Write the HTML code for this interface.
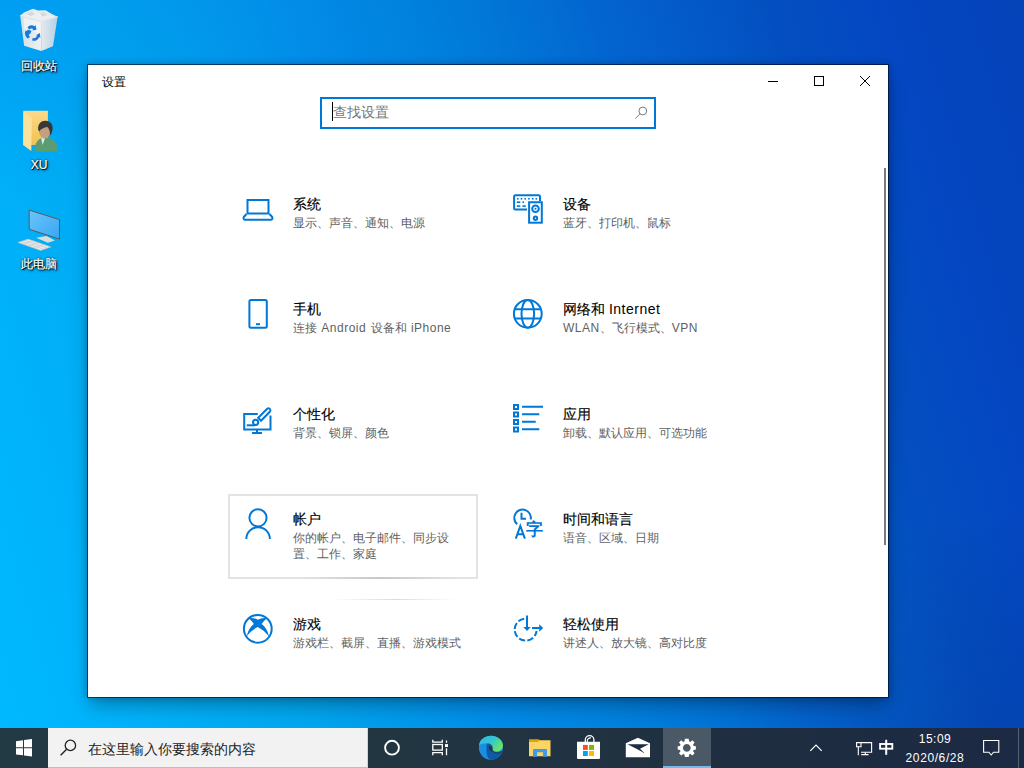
<!DOCTYPE html>
<html><head><meta charset="utf-8">
<style>
html,body{margin:0;padding:0;}
body{width:1024px;height:768px;overflow:hidden;position:relative;font-family:"Liberation Sans",sans-serif;
background:radial-gradient(ellipse 260px 200px at 0 0,rgba(0,60,230,.13),rgba(0,60,230,0)),radial-gradient(ellipse 300px 260px at 1024px 768px,rgba(10,0,60,.12),rgba(10,0,60,0)),linear-gradient(74deg,#00b9ff 0%,#00b3fb 10%,#00a6ee 26%,#028ce8 41%,#0082de 50%,#0178d8 56%,#0366d0 65%,#034ec0 80%,#0447c2 88%,#0442b8 100%);}
.abs{position:absolute;}
.dlabel{position:absolute;width:78px;text-align:center;color:#fff;font-size:12px;line-height:14px;
text-shadow:1px 1px 0 rgba(0,0,0,.85),0 0 2px #000,1px 1px 3px #000;-webkit-text-stroke:0.2px #fff;}
#win{position:absolute;left:87px;top:64px;width:800px;height:632px;background:#fff;border:1px solid rgba(0,10,30,.62);background-clip:padding-box;
box-shadow:0 0 7px rgba(0,0,0,.2),0 10px 18px -3px rgba(0,0,0,.3);}
.title{position:absolute;font-size:12px;line-height:16px;color:#000;}
.ctl{position:absolute;top:0;width:46px;height:32px;}
.item{position:absolute;width:250px;height:84px;}
.item .ic{position:absolute;left:12px;top:14px;width:36px;height:36px;}
.item .t{position:absolute;left:64px;top:10px;font-size:14px;line-height:20px;color:#000;white-space:nowrap;}
.item .s{position:absolute;left:64px;top:31px;font-size:12px;line-height:16px;color:#5f5f5f;width:175px;}
#taskbar{position:absolute;left:0;top:728px;width:1024px;height:40px;
background:linear-gradient(90deg,#223a44 0%,#223642 40%,#1f2e40 72%,#1c2944 100%);}
.tb{position:absolute;top:0;height:40px;}
.it{position:absolute;font-size:14px;line-height:20px;color:#000;white-space:nowrap;-webkit-text-stroke:0.15px #000;}
.is{position:absolute;font-size:12px;line-height:16px;color:#5f5f5f;width:170px;}
.l{letter-spacing:.5px;-webkit-text-stroke:0;}
.tray{position:absolute;color:#fff;font-size:12px;}
</style></head>
<body>
<!-- desktop icons -->
<svg class="abs" style="left:14px;top:4px;" width="50" height="50" viewBox="0 0 50 50">
 <defs><linearGradient id="rbl" x1="0" y1="0" x2="1" y2="0"><stop offset="0" stop-color="#d2dfe8"/><stop offset="1" stop-color="#eef1f3"/></linearGradient>
 <linearGradient id="rbr" x1="0" y1="0" x2="1" y2="0"><stop offset="0" stop-color="#e6eaed"/><stop offset="1" stop-color="#b4d0e6"/></linearGradient></defs>
 <path d="M6.2 11.7 L10 8.5 L19 4.8 L24 6.5 L31.5 6.2 L36 9 L43.6 13 L27 17.6 Z" fill="#eceef0"/>
 <path d="M12 10 L18 7.5 L21 10 L17 12Z M26 8.5 L31 7.8 L33 11 L28 12.5Z" fill="#d4d8dc"/>
 <path d="M6.2 11.7 L27 17.6 L27.3 46.9 L10.1 41.7 Z" fill="url(#rbl)"/>
 <path d="M27 17.6 L43.6 13 L39 42.3 L27.3 46.9 Z" fill="url(#rbr)"/>
 <path d="M6.2 11.7 L19.5 6.2 L43.6 13 L27 17.6 Z" fill="none" stroke="#dfe8ee" stroke-width="1"/>
 <path d="M9.5 13.5 L26.5 18.5 L26.5 30 L10 25Z" fill="#f5f7f8" opacity=".7"/>
 <g fill="#1b7ad9">
  <path d="M13.5 23.8 C14.5 21.5 17 20.8 19 21.6 L20.6 22.3 L21.6 21 L22.5 25.8 L18.2 26.4 L19.2 25 C18 24.2 16.5 24.3 15.6 25.4 Z"/>
  <path d="M11 27.5 L13.8 26.2 L13.2 25.4 L17.5 26.8 L16 30.6 L15.2 29.6 C14.6 30.8 15 32.4 16 33.2 L13.6 34.4 C11.8 33.4 10.6 30.2 11 27.5 Z"/>
  <path d="M18.5 34 C20.5 34.6 22.5 33.6 23.2 31.6 L22 31.2 L25.8 29 L26.4 33.6 L25 33.2 C24 36 21 37.4 18.2 36.6 Z"/>
 </g>
</svg>
<div class="dlabel" style="left:0;top:59px;">回收站</div>
<svg class="abs" style="left:14px;top:104px;" width="50" height="50" viewBox="0 0 50 50">
 <defs><linearGradient id="fdb" x1="0" y1="0" x2="0" y2="1"><stop offset="0" stop-color="#fcd98a"/><stop offset="1" stop-color="#f2c14e"/></linearGradient></defs>
 <path d="M9.4 6.8 H33.9 V41 H9.4Z" fill="url(#fdb)"/>
 <path d="M9.4 7.2 L17.9 14 L17.3 46.9 L9.1 41 Z" fill="#fbe29c"/>
 <path d="M20.5 47.5 C20.5 40 23.5 35 28.5 33.8 L35 33.8 C40.5 35 43.8 40 43.8 47.5 Z" fill="#5c9c73"/>
 <path d="M27.2 34.2 L31 34.2 L28.6 41 Z" fill="#e6eef0"/>
 <ellipse cx="30.6" cy="27.6" rx="5.6" ry="6.6" fill="#c4a07e"/>
 <path d="M24.2 26 C23.6 19.5 27.5 16.6 31.5 16.8 C36.5 17 39.2 20.5 38.6 25.5 C38.2 28.5 37 30.8 36 31.6 C36.2 27 35 24.2 33 22.8 C30.8 24 27.5 23.8 25.4 27.6 Z" fill="#383838"/>
</svg>
<div class="dlabel" style="left:0;top:158px;">XU</div>
<svg class="abs" style="left:10px;top:202px;" width="50" height="50" viewBox="0 0 50 50">
 <defs><linearGradient id="scr" x1="0" y1="0" x2="1" y2="1"><stop offset="0" stop-color="#6cc4fc"/><stop offset="1" stop-color="#38a6f2"/></linearGradient></defs>
 <path d="M19.2 8.1 L49.5 17.6 L49.5 37.1 L19.2 27.3 Z" fill="url(#scr)" stroke="#5a5a5a" stroke-width="1"/>
 <path d="M26 35.8 L36.5 33.9 L44.9 38.4 L37.8 40.7 Z" fill="#d9dcde"/>
 <path d="M7.8 40.4 L18.2 37.1 L41 44.9 L30.6 48.5 Z" fill="#e6e8ea" stroke="#b5b8ba" stroke-width=".6"/>
 <path d="M11 39.4 L33.5 47.2 M14.5 38.3 L37 46 M13 42 L23.5 38.6 M18.5 43.9 L29 40.5 M24 45.8 L34.5 42.4" stroke="#c0c3c6" stroke-width=".5"/>
</svg>
<div class="dlabel" style="left:0;top:257px;">此电脑</div>

<div id="win"></div>
<div class="title" style="left:102px;top:74px;">设置</div>
<!-- controls -->
<div class="abs" style="left:768px;top:81px;width:10px;height:1px;background:#000;"></div>
<div class="abs" style="left:814px;top:76px;width:8px;height:8px;border:1px solid #000;"></div>
<svg class="abs" style="left:859px;top:75px;" width="12" height="12" viewBox="0 0 12 12"><path d="M1 1 L11 11 M11 1 L1 11" stroke="#000" stroke-width="1"/></svg>
<!-- search -->
<div class="abs" style="left:320px;top:97px;width:332px;height:28px;border:2px solid #0078d7;background:#fff;"></div>
<div class="abs" style="left:332px;top:102px;width:1px;height:19px;background:#000;"></div>
<div class="abs" style="left:333px;top:103px;font-size:14px;line-height:18px;color:#767676;">查找设置</div>
<svg class="abs" style="left:633px;top:104px;" width="16" height="16" viewBox="0 0 16 16"><circle cx="9.8" cy="7" r="3.9" fill="none" stroke="#7a7a7a" stroke-width="1"/><path d="M7 9.8 L2.3 14.5" stroke="#7a7a7a" stroke-width="1"/></svg>
<!-- scrollbar -->
<div class="abs" style="left:884px;top:168px;width:2px;height:377px;background:#7a7a7a;"></div>
<!-- hover tile -->
<div class="abs" style="left:228px;top:494px;width:246px;height:81px;border:2px solid #e3e3e3;"></div>
<div class="abs" style="left:332px;top:599px;width:124px;height:1px;background:linear-gradient(90deg,rgba(0,0,0,0),rgba(0,0,0,.14),rgba(0,0,0,0));"></div>
<div class="abs" style="left:300px;top:577px;width:160px;height:2px;background:linear-gradient(90deg,rgba(0,0,0,0),rgba(0,0,0,.12),rgba(0,0,0,0));"></div>
<div class="it" style="left:293px;top:194px;">系统</div>
<div class="is" style="left:293px;top:215px;">显示、声音、通知、电源</div>
<div class="it" style="left:563px;top:194px;">设备</div>
<div class="is" style="left:563px;top:215px;">蓝牙、打印机、鼠标</div>
<div class="it" style="left:293px;top:299px;">手机</div>
<div class="is" style="left:293px;top:320px;word-spacing:1px;">连接 <span class="l">Android</span> 设备和 <span class="l">iPhone</span></div>
<div class="it" style="left:563px;top:299px;">网络和 <span class="l">Internet</span></div>
<div class="is" style="left:563px;top:320px;"><span class="l">WLAN</span>、飞行模式、<span class="l">VPN</span></div>
<div class="it" style="left:293px;top:404px;">个性化</div>
<div class="is" style="left:293px;top:425px;">背景、锁屏、颜色</div>
<div class="it" style="left:563px;top:404px;">应用</div>
<div class="is" style="left:563px;top:425px;">卸载、默认应用、可选功能</div>
<div class="it" style="left:293px;top:509px;">帐户</div>
<div class="is" style="left:293px;top:530px;">你的帐户、电子邮件、同步设置、工作、家庭</div>
<div class="it" style="left:563px;top:509px;">时间和语言</div>
<div class="is" style="left:563px;top:530px;">语音、区域、日期</div>
<div class="it" style="left:293px;top:614px;">游戏</div>
<div class="is" style="left:293px;top:635px;">游戏栏、截屏、直播、游戏模式</div>
<div class="it" style="left:563px;top:614px;">轻松使用</div>
<div class="is" style="left:563px;top:635px;">讲述人、放大镜、高对比度</div>
<svg class="abs" style="left:0;top:0;" width="1024" height="768" viewBox="0 0 1024 768">
<g fill="none" stroke="#0078d7" stroke-width="2">
 <!-- laptop -->
 <rect x="247.5" y="200" width="21" height="13.5"/>
 <path d="M246.5 214 L243.8 217 Q243 219.5 245 219.8 L271 219.8 Q273 219.5 272.2 217 L269.5 214" stroke-linejoin="round"/>
 <!-- devices -->
 <path d="M527 209.6 H515.5 Q514.1 209.6 514.1 208.2 V196.6 Q514.1 195.2 515.5 195.2 H538.6 Q540 195.2 540 196.6 V201"/>
 <rect x="529.1" y="202.25" width="12.7" height="20.45"/>
 <circle cx="535.5" cy="208.8" r="3.3"/>
 <circle cx="535.5" cy="218.2" r="1.7"/>
 <!-- phone -->
 <rect x="249.4" y="300.1" width="17.4" height="27.6" rx="1.5"/>
 <!-- globe -->
 <circle cx="527.8" cy="313.8" r="13.9"/>
 <ellipse cx="527.8" cy="313.8" rx="6.3" ry="13.9"/>
 <path d="M514.7 309.2 H540.9 M514.7 318.5 H540.9"/>
 <!-- personalization -->
 <path d="M257.8 413.9 H244.2 V429.5 H270.5 V415.5"/>
 <path d="M257 430 V433"/>
 <path d="M252 433 H262"/>
 <path d="M261 420.8 L270 411.5 A2 2 0 0 0 267.2 408.7 L258.2 417.8 Z"/>
 <circle cx="255.6" cy="422.3" r="2.6"/>
 <path d="M246.7 425.3 H255"/>
 <!-- apps -->
 <rect x="514" y="405" width="4" height="4"/>
 <rect x="514" y="412.5" width="4" height="4"/>
 <rect x="514" y="420" width="4" height="4"/>
 <rect x="514" y="427.5" width="4" height="4"/>
 <path d="M522 406.7 H543 M522 414.2 H539.3 M522 421.7 H535.7 M522 429.2 H539.3"/>
 <!-- account -->
 <circle cx="258" cy="517.8" r="8.6"/>
 <path d="M246.3 539 A11.8 11.8 0 0 1 269.9 539"/>
 <!-- time -->
 <path d="M530.7 519.5 A8.3 8.3 0 1 0 517.15 524.2"/>
 <path d="M521.5 512.7 V518.8 H526"/>
 <path d="M515.8 538.7 L520.3 525.9 L524.9 538.7 M517.3 534.2 H523.4"/>
 <!-- xbox -->
 <circle cx="257.8" cy="628.8" r="13.9"/>
 <!-- ease -->
 <path d="M524.2 618.7 A11 11 0 1 0 536.6 631" stroke-dasharray="6.4 2.24"/>
 <path d="M527 615.4 V627.5 M532 628.1 H539.5"/>
</g>
<g fill="#0078d7">
 <rect x="256" y="323.2" width="4" height="2"/>
 <circle cx="256.4" cy="421.6" r="0"/>
 <rect x="517" y="198" width="1.6" height="1.6"/><rect x="520.7" y="198" width="1.6" height="1.6"/><rect x="524.4" y="198" width="1.6" height="1.6"/><rect x="528.1" y="198" width="1.6" height="1.6"/><rect x="531.9" y="198" width="1.6" height="1.6"/><rect x="535.5" y="198" width="1.6" height="1.6"/>
 <rect x="516.8" y="201.4" width="3.5" height="1.6"/><rect x="522.4" y="201.4" width="1.6" height="1.6"/>
 <rect x="516.8" y="205.3" width="3.5" height="1.6"/><rect x="522.4" y="205.3" width="3.4" height="1.6"/>
 <circle cx="535.5" cy="208.8" r="1"/>
 <path transform="translate(236 605) scale(0.0651)" d="M195 205 Q265 188 335 228 Q405 188 475 205 Q425 245 395 292 Q472 345 508 482 Q440 392 335 338 Q230 392 162 482 Q198 345 275 292 Q245 245 195 205 Z"/>
 <path d="M523.3 627.1 H530.7 L527 630.9 Z M539.2 624.2 V631.8 L543.2 628 Z"/>
 <text x="526.3" y="534.6" font-size="16.5" font-weight="bold" font-family="Liberation Sans, sans-serif">字</text>
</g>
</svg>
<!--ITEMS-->

<div id="taskbar"></div>
<div class="abs" style="left:48px;top:728px;width:319px;height:39px;background:#f2f2f2;border-right:1px solid #d4d4d4;border-bottom:1px solid #bdbdbd;"></div>
<div class="abs" style="left:663px;top:728px;width:48px;height:40px;background:#4b5865;"></div>
<div class="abs" style="left:663px;top:766px;width:48px;height:2px;background:#76b9ed;"></div>
<div class="abs" style="left:88px;top:739px;font-size:14px;line-height:20px;color:#222;">在这里输入你要搜索的内容</div>
<div class="abs" style="left:1018px;top:728px;width:1px;height:40px;background:#5a6270;"></div>
<svg class="abs" style="left:0;top:0;" width="1024" height="768" viewBox="0 0 1024 768">
 <defs>
  <linearGradient id="edg1" x1="0" y1="0" x2="1" y2="1"><stop offset="0" stop-color="#1b9de2"/><stop offset="1" stop-color="#0b4f9c"/></linearGradient>
  <linearGradient id="edg2" x1="0" y1="0" x2="1" y2="0.7"><stop offset="0" stop-color="#30b6f2"/><stop offset="0.5" stop-color="#33c6cf"/><stop offset="1" stop-color="#6ee85a"/></linearGradient>
 </defs>
 <!-- windows logo -->
 <g fill="#fff">
  <path d="M16 741.2 L23 740.3 V747.3 H16 Z"/>
  <path d="M24 740.1 L32 739 V747.3 H24 Z"/>
  <path d="M16 748.3 H23 V755.3 L16 754.4 Z"/>
  <path d="M24 748.3 H32 V756.6 L24 755.5 Z"/>
 </g>
 <!-- search icon -->
 <circle cx="70.4" cy="745.4" r="5.2" fill="none" stroke="#222" stroke-width="1.3"/>
 <path d="M66.6 749.3 L60.6 755.3" stroke="#222" stroke-width="1.4"/>
 <!-- cortana -->
 <circle cx="392" cy="747.7" r="6.9" fill="none" stroke="#fff" stroke-width="1.9"/>
 <!-- task view -->
 <g fill="none" stroke="#fff" stroke-width="1.3">
  <path d="M432.8 739.8 V742.2 H442.3 V739.8"/>
  <rect x="432.8" y="744.5" width="9.5" height="5.6"/>
  <path d="M432.8 755.3 V752.6 H442.3 V755.3"/>
  <path d="M446.5 740.5 V742.8 M446.5 748.2 V755.3"/>
 </g>
 <rect x="445" y="744.1" width="3" height="2.9" fill="#fff"/>
 <!-- edge -->
 <g transform="translate(474 732) scale(0.041667)">
  <circle cx="406" cy="380" r="288" fill="#1b8ee2"/>
  <path d="M300 330 C300 270 360 250 420 280 C470 310 480 380 450 430 C520 500 610 500 680 440 C660 560 560 660 420 668 C340 660 300 560 300 470 Z" fill="#0d5aa6"/>
  <path d="M118 330 C130 180 260 90 410 90 C570 90 695 200 695 320 C695 420 620 470 540 470 C480 470 440 440 445 400 C460 340 420 280 330 270 C230 262 150 290 118 330 Z" fill="url(#edg2)"/>
  <path d="M360 340 C400 320 445 350 440 400 C438 430 450 455 470 470 C420 470 370 440 360 400 Z" fill="#223642"/>
  <path d="M470 478 C540 520 620 520 668 470" fill="none" stroke="#223642" stroke-width="22"/>
 </g>
 <!-- explorer -->
 <path d="M529 739.2 H538.5 L539.8 740.5 V742 H529 Z" fill="#e6a100"/>
 <path d="M529 742 V756.2 H550.5 V740.2 H539 L538 742 Z" fill="#fcd463"/>
 <path d="M533 756.8 V750 Q533 749 534 749 H546 Q547 749 547 750 V756.8 H543 V752.2 H537.1 V756.8 Z" fill="#3d9be9"/>
 <!-- store -->
 <path d="M585.3 742 V740 A4.3 4.3 0 0 1 593.9 740 V742" fill="none" stroke="#fff" stroke-width="1.3"/>
 <path d="M587.3 742 V740.5 A3 3 0 0 1 591 738" fill="none" stroke="#fff" stroke-width="1.1"/>
 <path d="M577 741.8 H600 V758 Q600 759.1 598.8 759.1 H578.2 Q577 759.1 577 758 Z" fill="#fff"/>
 <rect x="583" y="744.9" width="4.8" height="5" fill="#f25022"/>
 <rect x="589" y="744.9" width="5" height="5" fill="#7fba00"/>
 <rect x="583" y="751" width="4.8" height="5" fill="#00a4ef"/>
 <rect x="589" y="751" width="5" height="5" fill="#ffb900"/>
 <!-- mail -->
 <path d="M625.8 743.2 L637.9 737.8 L650 743.2 V757.2 H625.8 Z" fill="#fff"/>
 <path d="M627.5 744.3 H648.8 L640 748.8 L644.8 753.6 L637.9 749.6 Z" fill="#1e2d40"/>
 <!-- gear -->
 <g transform="translate(686.8 747.9)">
  <path fill="#fff" fill-rule="evenodd" d="M-1.9 -9.1 H1.9 L2.3 -6.6 L3.6 -6 L5.6 -7.6 L7.8 -5.4 L6.3 -3.4 L6.8 -2 L9.1 -1.7 V1.7 L6.8 2 L6.3 3.4 L7.8 5.4 L5.6 7.6 L3.6 6.1 L2.3 6.6 L1.9 9.1 H-1.9 L-2.3 6.6 L-3.6 6.1 L-5.6 7.6 L-7.8 5.4 L-6.3 3.4 L-6.8 2 L-9.1 1.7 V-1.7 L-6.8 -2 L-6.3 -3.4 L-7.8 -5.4 L-5.6 -7.6 L-3.6 -6 L-2.3 -6.6 Z M0 -3.9 A3.9 3.9 0 1 0 0.01 -3.9 Z"/>
 </g>
 <!-- chevron -->
 <path d="M810.3 750.8 L816 745 L821.7 750.8" fill="none" stroke="#fff" stroke-width="1.2"/>
 <!-- network -->
 <g fill="none" stroke="#fff" stroke-width="1.1">
  <path d="M861 742.6 H871.6 V752.3 H861"/>
  <path d="M856.6 742.6 H861 V746.8 H856.6 Z"/>
  <path d="M858.3 746.8 V755.2"/>
  <path d="M865.3 752.3 V754.6 M861.2 754.6 H868.6"/>
 </g>
 <!-- zhong -->
 <rect x="880.1" y="744" width="12.2" height="4.7" fill="none" stroke="#fff" stroke-width="1.9"/>
 <path d="M886.2 739.8 V754.8" stroke="#fff" stroke-width="2"/>
 <!-- notification -->
 <path d="M983.6 740.5 H998.8 V752.2 H993.5 L991.2 755 L988.9 752.2 H983.6 Z" fill="none" stroke="#fff" stroke-width="1.1"/>
</svg>
<div class="abs" style="left:904px;top:731px;width:62px;text-align:center;font-size:12px;line-height:16px;color:#fff;letter-spacing:0.5px;">15:09</div>
<div class="abs" style="left:904px;top:750px;width:62px;text-align:center;font-size:12px;line-height:16px;color:#fff;letter-spacing:0.6px;">2020/6/28</div>

</body></html>
